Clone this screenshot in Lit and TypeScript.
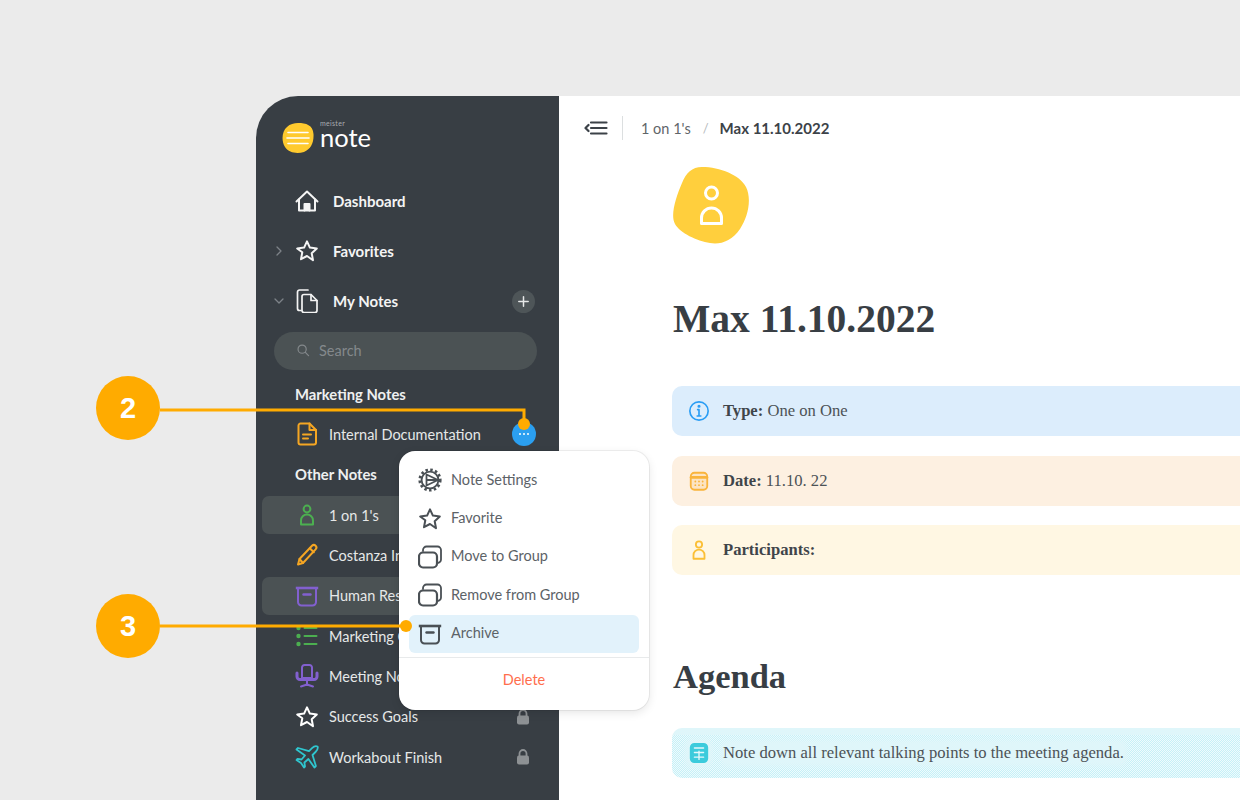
import { LitElement, html, css, svg } from "lit";
import { customElement } from "lit/decorators.js";

const ic = (body: unknown, color = "currentColor", size = 24, sw = 2) => html`<svg color=${color} width=${size} height=${size} viewBox="0 0 24 24" fill="none" stroke="currentColor" stroke-width=${sw} stroke-linecap="round" stroke-linejoin="round">${body}</svg>`;

const I = {
  home: svg`<path d="M1.500 12.500 12 2.500l10.500 10"/><path d="M4 10.500V21.500h16V10.500"/><path d="M9.500 21.500v-6.500h5v6.500" fill="currentColor"/>`,
  star: svg`<path d="M12 2.300l2.900 6.300 6.900.9-5.100 4.800 1.300 6.900L12 17l-6 3.200 1.300-6.900L2.200 9.500l6.900-.9z"/>`,
  notes: svg`<path d="M6 21.500H4.500a2 2 0 0 1-2-2V3a2 2 0 0 1 2-2H13"/><path d="M7 7.500a2 2 0 0 1 2-2h7l6 6v10a2 2 0 0 1-2 2H9a2 2 0 0 1-2-2z"/><path d="M16 5.500v6h6"/>`,
  doc: svg`<path d="M5.500 1.500h9l6.500 6.500v12.500a2 2 0 0 1-2 2H5.500a2 2 0 0 1-2-2v-17a2 2 0 0 1 2-2z"/><path d="M14.500 1.500V8H21"/><path d="M8 12.500h8M8 16.500h5"/>`,
  person: svg`<circle cx="12" cy="6" r="3.400"/><path d="M6 21.500v-4a6 6 0 0 1 12 0v4z"/>`,
  pencil: svg`<path d="M17 2.800a2.500 2.500 0 0 1 3.600 3.600L8 20l-5 1.500L4.500 16z"/><path d="M14.800 5.200l4 4M4.500 16l3.500 4"/>`,
  archive: svg`<path d="M.8 4h22.400" stroke-width="2.600" stroke-linecap="butt"/><path d="M3 5v13a3.500 3.500 0 0 0 3.500 3.500h11A3.500 3.500 0 0 0 21 18V5"/><path d="M8.500 10.500h7" stroke-width="2.400"/>`,
  list: svg`<path d="M9.500 4h12M9.500 12h12M9.500 20h12"/><circle cx="3.500" cy="4" r="1.200" fill="currentColor"/><circle cx="3.500" cy="12" r="1.200" fill="currentColor"/><circle cx="3.500" cy="20" r="1.200" fill="currentColor"/>`,
  chair: svg`<path d="M7 3.500a2.500 2.500 0 0 1 2.500-2.500h5A2.500 2.500 0 0 1 17 3.500V14H7z"/><path d="M2 9v3.500a3 3 0 0 0 3 3h14a3 3 0 0 0 3-3V9" stroke-width="3"/><path d="M12 15.500v5.500M6 22.500l6-2 6 2"/>`,
  plane: svg`<path d="M22.500 1.500c-1.700-.8-4 .2-5.500 1.700L14 6.200 3 3 1.500 4.500 10 10.500 6.500 14.500l-4-.6L1.500 15l4.500 3 3 4.500 1-1-.6-4 4-3.500 6 8.500 1.500-1.500L17.500 10l3-3c1.500-1.500 2.800-3.800 2-5.500z" stroke-width="1.800"/>`,
  gear: svg`<circle cx="12" cy="12" r="10.200" stroke-width="2.800" stroke-dasharray="2.500 2.300" stroke-linecap="butt"/><circle cx="12" cy="12" r="8.400" stroke-width="1.800"/><path d="M8.500 6.500 20 12 8.500 17.500zM8.500 12H20" stroke-width="1.800"/>`,
  group: svg`<rect x="1" y="7.500" width="18" height="15" rx="4" stroke-width="2.200"/><path d="M5 6V5a3.500 3.500 0 0 1 3.500-3.500h11A3.500 3.500 0 0 1 23 5v9.500a3.500 3.500 0 0 1-3.500 3.500" stroke-width="1.800"/>`,
  info: svg`<circle cx="12" cy="12" r="10"/><path d="M12 10.500v7M10.500 10.500H12M10 17.500h4"/><circle cx="12" cy="6.800" r=".8" fill="currentColor"/>`,
  cal: svg`<rect x="3" y="3" width="18" height="18.500" rx="4" fill="currentColor" fill-opacity=".18"/><path d="M3.500 8h17" stroke-width="3"/><path d="M8 12.500h.01M12 12.500h.01M16 12.500h.01M8 16.500h.01M12 16.500h.01M16 16.500h.01"/>`,
  calFill: svg`<rect x="3" y="2" width="18" height="20" rx="4" fill="currentColor"/><path d="M7 6.500h10M7 11.500h10M7 16.500h10M12 10v9" stroke="#e4f8fb" stroke-width="1.500"/>`,
  search: svg`<circle cx="10.500" cy="10.500" r="7"/><path d="M16 16l5.500 5.500"/>`,
};

const lock = html`<svg class="lock" width="14" height="16" viewBox="0 0 14 16"><path d="M3.500 7V4.500a3.500 3.500 0 0 1 7 0V7" fill="none" stroke="#8d9194" stroke-width="1.800"/><rect x="1" y="6.500" width="12" height="9" rx="2" fill="#8d9194"/></svg>`;

const chevron = (down: boolean) => html`<svg width="12" height="12" viewBox="0 0 12 12" fill="none" stroke="#7d8388" stroke-width="1.300" stroke-linecap="round" stroke-linejoin="round"><path d=${down ? "M2 4l4 4 4-4" : "M4 2l4 4-4 4"}/></svg>`;

type Note = { label: string; icon: unknown; color: string; active?: boolean; lock?: boolean; dots?: boolean };

const marketing: Note[] = [{ label: "Internal Documentation", icon: I.doc, color: "#f5a623", dots: true }];
const others: Note[] = [
  { label: "1 on 1's", icon: I.person, color: "#4caf50", active: true },
  { label: "Costanza In", icon: I.pencil, color: "#f5a623" },
  { label: "Human Res", icon: I.archive, color: "#8260cf", active: true },
  { label: "Marketing C", icon: I.list, color: "#4caf50" },
  { label: "Meeting No", icon: I.chair, color: "#8260cf" },
  { label: "Success Goals", icon: I.star, color: "#ffffff", lock: true },
  { label: "Workabout Finish", icon: I.plane, color: "#2fc6cf", lock: true },
];

const menu = [
  { label: "Note Settings", icon: I.gear },
  { label: "Favorite", icon: I.star },
  { label: "Move to Group", icon: I.group },
  { label: "Remove from Group", icon: I.group },
  { label: "Archive", icon: I.archive, hi: true },
];

@customElement("app-root")
export class AppRoot extends LitElement {
  static styles = css`
    :host { display: block; position: relative; width: 1240px; height: 800px; overflow: hidden; background: #ebebeb; font-family: Lato, "Liberation Sans", sans-serif; }
    .page { height: 100%; padding: 96px 0 0 256px; box-sizing: border-box; }
    .window { display: flex; width: 1100px; height: 800px; border-radius: 42px 0 0 0; overflow: hidden; background: #fff; }
    .side { flex: none; width: 303px; background: #383e44; color: #fff; }
    .logo { height: 80px; display: flex; align-items: center; padding: 4px 0 0 26px; box-sizing: border-box; gap: 6px; }
    .wordmark { display: flex; flex-direction: column; margin-top: -10px; }
    .wordmark small { font-size: 7px; color: #a9adb0; letter-spacing: .3px; height: 9px; line-height: 9px; }
    .wordmark b { font-weight: 400; font-size: 25.500px; line-height: 19px; color: #fff; }
    .nav { height: 50px; display: flex; align-items: center; padding-right: 24px; font-weight: 700; font-size: 15px; color: #f4f4f4; }
    .chev { width: 39px; display: flex; justify-content: flex-end; padding-right: 10px; box-sizing: border-box; height: 12px; }
    .nav .lab { margin-left: 14px; flex: 1; padding-bottom: 1px; }
    .plus { width: 23px; height: 23px; border-radius: 50%; background: #4e5558; display: grid; place-items: center; }
    .search { height: 38px; margin: 6px 22px 4px 18px; border-radius: 19px; background: #4b5254; display: flex; align-items: center; padding: 0 0 2px 22px; box-sizing: border-box; gap: 9px; font-size: 14.500px; color: #84898c; }
    .sec { height: 40.330px; display: flex; align-items: center; padding: 0 0 1px 39px; box-sizing: border-box; font-size: 14.800px; font-weight: 700; color: #eef0f0; }
    .row { height: 40.330px; padding: 1.160px 6px; box-sizing: border-box; }
    .in { height: 38px; border-radius: 7px; display: flex; align-items: center; padding: 0 20px 0 33px; font-size: 14.500px; color: #e6e8e8; }
    .in.active { background: #4b5254; }
    .in .t { margin-left: 10px; flex: 1; white-space: nowrap; }
    .dots { width: 24px; height: 24px; margin-right: -3px; border-radius: 50%; background: #2b9ff0; display: flex; align-items: center; justify-content: center; gap: 2px; }
    .dots i { width: 2px; height: 2px; border-radius: 50%; background: #fff; }
    .lock { margin-right: 3px; }
    .main { flex: 1; min-width: 0; color: #3a4045; }
    .bar { height: 64px; display: flex; align-items: center; padding-left: 25px; }
    .burger { width: 24px; height: 24px; }
    .sep { width: 1px; height: 24px; background: #dcdfe0; margin: 0 18px 0 14px; }
    .crumb { font-size: 14.500px; color: #5f6569; }
    .slash { color: #b5b9bc; margin: 0 12px; font-size: 13px; }
    .cur { font-size: 15px; font-weight: 700; color: #3c4248; margin-left: -1px; }
    .doc { padding: 7px 0 0 113px; }
    .blob { display: block; width: 78px; height: 78px; }
    h1, h2 { margin: 0; font-family: "Liberation Serif", serif; font-weight: 700; color: #383e44; }
    h1 { font-size: 39.500px; line-height: 48px; margin-top: 50px; padding-left: 1px; }
    h2 { font-size: 34.500px; line-height: 44px; margin-top: 79px; margin-bottom: 30px; padding-left: 1px; }
    .call { width: 640px; height: 50px; border-radius: 10px; display: flex; align-items: center; padding-left: 16px; box-sizing: border-box; gap: 13px; font-family: "Liberation Serif", serif; font-size: 16.600px; color: #4c5256; margin-bottom: 19.500px; }
    .call b { color: #3f454a; }
    .blue { background: #dcedfc; margin-top: 43px; }
    .peach { background: #fdf0e1; }
    .cream { background: #fff7e3; }
    .teal { margin-bottom: 0; background: linear-gradient(#dff6fa, #dff6fa) 0 0 / 100% 7px no-repeat, repeating-conic-gradient(#c6f0f7 0 25%, #eefbfd 0 50%) 0 0 / 2px 2px; }
    .teal svg, .teal span { background: #dff6fa; box-shadow: 0 0 4px 3px #dff6fa; border-radius: 4px; }
    .menu { position: absolute; left: 399px; top: 451px; width: 250px; height: 259px; box-sizing: border-box; border-radius: 16px; background: #fff; box-shadow: 0 0 0 1px rgba(0,0,0,.06), 0 3px 10px rgba(0,0,0,.10); padding: 10px 10px 0; display: flex; flex-direction: column; color: #4a5055; }
    .mi { height: 38.400px; flex: none; display: flex; align-items: center; padding-left: 9px; gap: 9px; font-size: 14.500px; color: #5c6267; border-radius: 6px; box-sizing: border-box; }
    .mi span { padding-bottom: 2px; }
    .mi.hi { background: #e2f2fb; }
    .mdiv { height: 1px; background: #e8eaeb; margin: 4px -10px 0; flex: none; }
    .del { flex: 1; display: flex; align-items: center; justify-content: center; padding-bottom: 8px; font-size: 14.500px; color: #ff6e4d; }
    .badge { position: absolute; left: 96px; width: 64px; height: 64px; border-radius: 50%; background: #ffab00; color: #fff; display: grid; place-items: center; font-family: "Liberation Sans", sans-serif; font-weight: 700; font-size: 29px; }
    .b2 { top: 376px; }
    .b3 { top: 594px; }
    .lines { position: absolute; left: 0; top: 0; pointer-events: none; }
  `;

  private note(n: Note) {
    return html`<div class="row"><div class="in ${n.active ? "active" : ""}">
      ${ic(n.icon, n.color, 24)}
      <span class="t">${n.label}</span>
      ${n.dots ? html`<span class="dots"><i></i><i></i><i></i></span>` : ""}
      ${n.lock ? lock : ""}
    </div></div>`;
  }

  render() {
    return html`
      <div class="page"><div class="window">
        <aside class="side">
          <div class="logo">
            <svg width="32" height="32" viewBox="0 0 32 32"><path d="M16 1C24 1 31 3 31.500 12 32 21 29 27 22 30 15 32 7 31 3 25 -1 19 0 9 5 5 8 2 12 1 16 1Z" fill="#ffca2e"/><path d="M6 10.500h20M5 16h22M6 21.500h20" stroke="#fff" stroke-width="1.600" stroke-linecap="round"/></svg>
            <div class="wordmark"><small>meister</small><b>note</b></div>
          </div>
          <div class="nav"><span class="chev"></span>${ic(I.home, "#f4f4f4", 24)}<span class="lab">Dashboard</span></div>
          <div class="nav"><span class="chev">${chevron(false)}</span>${ic(I.star, "#f4f4f4", 24)}<span class="lab">Favorites</span></div>
          <div class="nav"><span class="chev">${chevron(true)}</span>${ic(I.notes, "#f4f4f4", 24, 1.700)}<span class="lab">My Notes</span>
            <span class="plus"><svg width="11" height="11" viewBox="0 0 11 11" stroke="#e6e8e8" stroke-width="1.500" stroke-linecap="round"><path d="M5.500 .8v9.400M.8 5.500h9.400"/></svg></span></div>
          <div class="search">${ic(I.search, "#84898c", 14)}<span>Search</span></div>
          <div class="sec">Marketing Notes</div>
          ${marketing.map((n) => this.note(n))}
          <div class="sec">Other Notes</div>
          ${others.map((n) => this.note(n))}
        </aside>
        <main class="main">
          <div class="bar">
            <svg class="burger" viewBox="0 0 24 24" fill="none" stroke="#3c4248" stroke-width="2.200" stroke-linecap="round" stroke-linejoin="round"><path d="M7 6.500h15.500M7 12h15.500M7 17.500h15.500M4.500 9 1.500 12l3 3"/></svg>
            <span class="sep"></span>
            <span class="crumb">1 on 1's</span><span class="slash">/</span><span class="cur">Max 11.10.2022</span>
          </div>
          <div class="doc">
            <svg class="blob" viewBox="0 0 78 78"><path d="M30 0C48 0 68 8 74 20 80 32 76 50 68 62 60 74 48 78 38 76 25 74 8 66 3 57-2 48 4 30 10 16 14 6 20 0 30 0Z" fill="#ffcf3d"/><g fill="none" stroke="#fff" stroke-width="3" stroke-linejoin="round"><circle cx="39.500" cy="26" r="6"/><path d="M29.500 56.500V51a10 10 0 0 1 20 0v5.500z"/></g></svg>
            <h1>Max 11.10.2022</h1>
            <div class="call blue">${ic(I.info, "#2a9df4", 22, 1.800)}<span><b>Type:</b> One on One</span></div>
            <div class="call peach">${ic(I.cal, "#f9b43c", 22)}<span><b>Date:</b> 11.10. 22</span></div>
            <div class="call cream">${ic(I.person, "#fbbf35", 22)}<span><b>Participants:</b></span></div>
            <h2>Agenda</h2>
            <div class="call teal">${ic(I.calFill, "#3ccbdc", 22)}<span>Note down all relevant talking points to the meeting agenda.</span></div>
          </div>
        </main>
      </div></div>

      <div class="menu">
        ${menu.map((m) => html`<div class="mi ${m.hi ? "hi" : ""}">${ic(m.icon, "#4a5055", 24)}<span>${m.label}</span></div>`)}
        <div class="mdiv"></div>
        <div class="del">Delete</div>
      </div>

      <svg class="lines" width="1240" height="800" fill="none">
        <path d="M160 410H524V424M160 626H406" stroke="#ffab00" stroke-width="3"/>
        <circle cx="524" cy="424" r="6" fill="#ffab00"/>
        <circle cx="406" cy="626" r="6" fill="#ffab00"/>
      </svg>
      <div class="badge b2">2</div>
      <div class="badge b3">3</div>
    `;
  }
}
